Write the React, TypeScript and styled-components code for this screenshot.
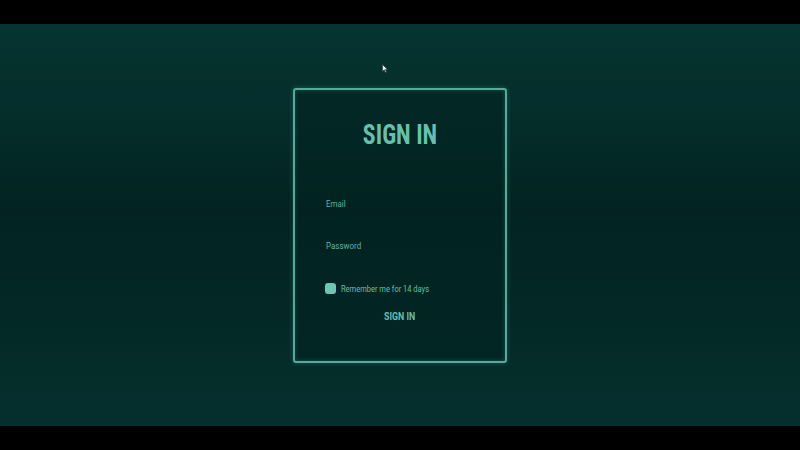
import React, { useState } from 'react'
import styled, { createGlobalStyle } from 'styled-components'

const GlobalStyle = createGlobalStyle`
  html, body {
    margin: 0;
    padding: 0;
    background: #000;
    font-family: 'Roboto', 'Liberation Sans', sans-serif;
  }
`

const Screen = styled.div`
  width: 800px;
  height: 450px;
  display: flex;
  flex-direction: column;
  background: #000;
  overflow: hidden;
`

const Letterbox = styled.div`
  height: 24px;
  flex: none;
  background: #000;
`

const Stage = styled.main`
  position: relative;
  flex: 1;
  display: flex;
  align-items: center;
  justify-content: center;
  background: linear-gradient(
    180deg,
    #063430 0%,
    #042d2a 25%,
    #022321 46%,
    #032826 70%,
    #05302d 100%
  );
`

const Card = styled.form`
  width: 210px;
  height: 271px;
  box-sizing: content-box;
  border: 2px solid #58a999;
  border-radius: 3px;
  background: rgba(2, 34, 32, 0.55);
  box-shadow: 0 0 5px rgba(93, 181, 165, 0.3), inset 0 0 4px rgba(93, 181, 165, 0.3);
  display: flex;
  flex-direction: column;
  padding: 0;
`

const Title = styled.h1`
  margin: 30px 0 0;
  text-align: center;
  font-size: 28px;
  line-height: 30px;
  font-weight: 700;
  color: #68bfad;
  font-stretch: condensed;
  transform: scaleX(0.85);
`

const Fields = styled.div`
  display: flex;
  flex-direction: column;
  gap: 26px;
  margin: 46px 0 0 31px;
`

const Field = styled.input`
  width: 150px;
  height: 16px;
  padding: 0;
  border: none;
  outline: none;
  background: transparent;
  font-family: 'Roboto', 'Liberation Sans', sans-serif;
  font-size: 9.5px;
  color: #68bfad;
  transform: scaleX(0.84);
  transform-origin: left center;

  &::placeholder {
    color: #5fb4a3;
  }
`

const RememberRow = styled.label`
  display: flex;
  align-items: center;
  gap: 5px;
  margin: 29px 0 0 30px;
  font-size: 9.5px;
  color: #68bfad;
  cursor: pointer;
`

const Box = styled.span<{ $checked: boolean }>`
  width: 11px;
  height: 11px;
  border-radius: 3px;
  background: ${({ $checked }) => ($checked ? '#6fc4b4' : 'transparent')};
  border: ${({ $checked }) => ($checked ? 'none' : '1px solid #6fc4b4')};
  flex: none;
`

const RememberText = styled.span`
  display: inline-block;
  transform: scaleX(0.79);
  transform-origin: left center;
  white-space: nowrap;
`

const Submit = styled.button`
  align-self: center;
  margin-top: 16px;
  padding: 0;
  border: none;
  background: transparent;
  font-family: 'Roboto', 'Liberation Sans', sans-serif;
  font-weight: 700;
  font-size: 10.5px;
  color: #68bfad;
  transform: scaleX(0.84);
  cursor: pointer;
`

const Pointer = styled.svg`
  position: absolute;
  left: 382px;
  top: 40px;
`

export default function App() {
  const [remember, setRemember] = useState(true)

  return (
    <>
      <GlobalStyle />
      <Screen>
        <Letterbox />
        <Stage>
          <Pointer width="6" height="9" viewBox="0 0 6 9">
            <path d="M0.5 0.5 L0.5 7.5 L2.2 5.8 L3.5 8.5 L4.5 8 L3.3 5.4 L5.5 5.4 Z" fill="#e8f2f0" stroke="#1a3a36" strokeWidth="0.6" />
          </Pointer>
          <Card onSubmit={(e) => e.preventDefault()}>
            <Title>SIGN IN</Title>
            <Fields>
              <Field type="email" placeholder="Email" />
              <Field type="password" placeholder="Password" />
            </Fields>
            <RememberRow onClick={() => setRemember(!remember)}>
              <Box $checked={remember} />
              <RememberText>Remember me for 14 days</RememberText>
            </RememberRow>
            <Submit type="submit">SIGN IN</Submit>
          </Card>
        </Stage>
        <Letterbox />
      </Screen>
    </>
  )
}
